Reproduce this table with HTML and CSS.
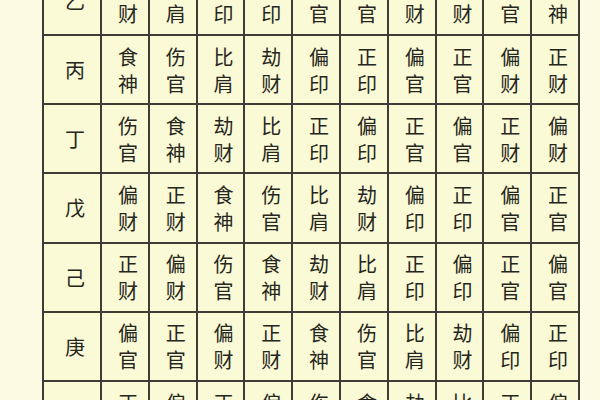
FILE: index.html
```html
<!DOCTYPE html>
<html lang="zh">
<head>
<meta charset="utf-8">
<title>十神表</title>
<link rel="stylesheet" href="styles.css">
</head>
<body>
<div class="page">
  <div class="grid">
    <div class="stem">乙</div>
    <div class="cell">劫<br>财</div><div class="cell">比<br>肩</div><div class="cell">正<br>印</div><div class="cell">偏<br>印</div><div class="cell">正<br>官</div><div class="cell">偏<br>官</div><div class="cell">正<br>财</div><div class="cell">偏<br>财</div><div class="cell">伤<br>官</div><div class="cell">食<br>神</div>

    <div class="stem">丙</div>
    <div class="cell">食<br>神</div><div class="cell">伤<br>官</div><div class="cell">比<br>肩</div><div class="cell">劫<br>财</div><div class="cell">偏<br>印</div><div class="cell">正<br>印</div><div class="cell">偏<br>官</div><div class="cell">正<br>官</div><div class="cell">偏<br>财</div><div class="cell">正<br>财</div>

    <div class="stem">丁</div>
    <div class="cell">伤<br>官</div><div class="cell">食<br>神</div><div class="cell">劫<br>财</div><div class="cell">比<br>肩</div><div class="cell">正<br>印</div><div class="cell">偏<br>印</div><div class="cell">正<br>官</div><div class="cell">偏<br>官</div><div class="cell">正<br>财</div><div class="cell">偏<br>财</div>

    <div class="stem">戊</div>
    <div class="cell">偏<br>财</div><div class="cell">正<br>财</div><div class="cell">食<br>神</div><div class="cell">伤<br>官</div><div class="cell">比<br>肩</div><div class="cell">劫<br>财</div><div class="cell">偏<br>印</div><div class="cell">正<br>印</div><div class="cell">偏<br>官</div><div class="cell">正<br>官</div>

    <div class="stem">己</div>
    <div class="cell">正<br>财</div><div class="cell">偏<br>财</div><div class="cell">伤<br>官</div><div class="cell">食<br>神</div><div class="cell">劫<br>财</div><div class="cell">比<br>肩</div><div class="cell">正<br>印</div><div class="cell">偏<br>印</div><div class="cell">正<br>官</div><div class="cell">偏<br>官</div>

    <div class="stem">庚</div>
    <div class="cell">偏<br>官</div><div class="cell">正<br>官</div><div class="cell">偏<br>财</div><div class="cell">正<br>财</div><div class="cell">食<br>神</div><div class="cell">伤<br>官</div><div class="cell">比<br>肩</div><div class="cell">劫<br>财</div><div class="cell">偏<br>印</div><div class="cell">正<br>印</div>

    <div class="stem">辛</div>
    <div class="cell">正<br>官</div><div class="cell">偏<br>官</div><div class="cell">正<br>财</div><div class="cell">偏<br>财</div><div class="cell">伤<br>官</div><div class="cell">食<br>神</div><div class="cell">劫<br>财</div><div class="cell">比<br>肩</div><div class="cell">正<br>印</div><div class="cell">偏<br>印</div>
  </div>
</div>
</body>
</html>
```

FILE: styles.css
```css
html, body {
  margin: 0;
  padding: 0;
  background: #fcfae2;
}

.page {
  width: 600px;
  height: 400px;
  overflow: hidden;
  padding-left: 42px;
  box-sizing: border-box;
}

.grid {
  display: grid;
  grid-template-columns: 56px repeat(10, 45.8px);
  grid-auto-rows: 67.2px;
  gap: 2px;
  padding: 2px;
  width: max-content;
  margin-top: -35.2px;
  background: #3e3c34;
  font-family: "Noto Sans CJK SC", "Noto Sans", sans-serif;
  font-size: 20px;
  color: #262620;
}

.stem,
.cell {
  background: #fbfad6;
  display: flex;
  align-items: center;
  justify-content: center;
  text-align: center;
  padding-left: 6px;
  box-sizing: border-box;
}

.cell {
  line-height: 27px;
}
```
